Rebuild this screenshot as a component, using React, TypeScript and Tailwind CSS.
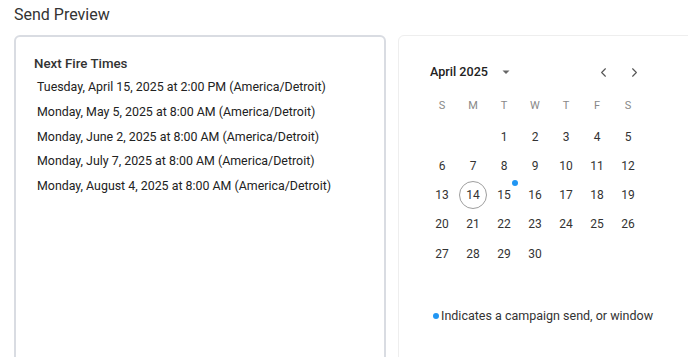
import { ChevronLeft, ChevronRight } from "lucide-react";

const fireTimes = [
  "Tuesday, April 15, 2025 at 2:00 PM (America/Detroit)",
  "Monday, May 5, 2025 at 8:00 AM (America/Detroit)",
  "Monday, June 2, 2025 at 8:00 AM (America/Detroit)",
  "Monday, July 7, 2025 at 8:00 AM (America/Detroit)",
  "Monday, August 4, 2025 at 8:00 AM (America/Detroit)",
];

const weekDays = ["S", "M", "T", "W", "T", "F", "S"];

// April 2025 starts on a Tuesday
const cells: (number | null)[] = [null, null, ...Array.from({ length: 30 }, (_, i) => i + 1)];

function DayCell({ day }: { day: number | null }) {
  if (day === null) return <div className="h-[29.25px]" />;
  const isToday = day === 14;
  const hasSend = day === 15;
  return (
    <div className="relative flex h-[29.25px] items-center justify-center">
      <span
        className={`flex h-[28px] w-[28px] items-center justify-center rounded-full text-[12px] text-[#333] ${
          isToday ? "border border-[#9e9e9e]" : ""
        }`}
      >
        {day}
      </span>
      {hasSend && <span className="absolute top-[-1px] right-[2px] h-[6px] w-[6px] rounded-full bg-[#2196f3]" />}
    </div>
  );
}

export default function App() {
  return (
    <div className="h-[357px] w-[688px] overflow-hidden bg-white pt-[3px] pl-[14px] font-['Roboto',sans-serif]">
      <h2 className="mb-[8px] text-[16px] leading-[24px] text-[#333]">Send Preview</h2>
      <div className="flex gap-[12px]">
        <section className="h-[340px] w-[372px] shrink-0 rounded-[6px] border-2 border-[#d9dce2] pt-[17px] pl-[18px]">
          <h3 className="text-[13.3px] leading-[20px] font-medium text-[#333]">Next Fire Times</h3>
          <ul className="mt-[1px] pl-[3px]">
            {fireTimes.map((t) => (
              <li key={t} className="text-[12.4px] leading-[24.75px] text-[#222]">
                {t}
              </li>
            ))}
          </ul>
        </section>
        <section className="h-[340px] w-[320px] shrink-0 rounded-[6px] border border-[#eeeeee] pt-[21px]">
          <div className="mb-[3px] ml-[31px] flex h-[30px] w-[216px] items-center">
            <span className="text-[12.6px] font-medium text-[#222]">April 2025</span>
            <svg className="ml-[13px]" width="10" height="10" viewBox="0 0 10 10">
              <path d="M1.5 3.5 L8.5 3.5 L5 7 Z" fill="#666" />
            </svg>
            <div className="ml-auto flex gap-[7px]">
              <button className="flex h-[24px] w-[24px] items-center justify-center text-[#555]">
                <ChevronLeft size={15} strokeWidth={1.8} />
              </button>
              <button className="flex h-[24px] w-[24px] items-center justify-center text-[#555]">
                <ChevronRight size={15} strokeWidth={1.8} />
              </button>
            </div>
          </div>
          <div className="ml-[27.5px] grid w-[217px] grid-cols-7">
            {weekDays.map((d, i) => (
              <div key={i} className="flex h-[32px] items-center justify-center text-[11px] text-[#888]">
                {d}
              </div>
            ))}
            {cells.map((d, i) => (
              <DayCell key={i} day={d} />
            ))}
          </div>
          <div className="mt-[38px] ml-[34px] flex items-center gap-[2px] text-[12.5px] leading-[20px] text-[#333]">
            <span className="h-[6px] w-[6px] rounded-full bg-[#2196f3]" />
            <span>Indicates a campaign send, or window</span>
          </div>
        </section>
      </div>
    </div>
  );
}
